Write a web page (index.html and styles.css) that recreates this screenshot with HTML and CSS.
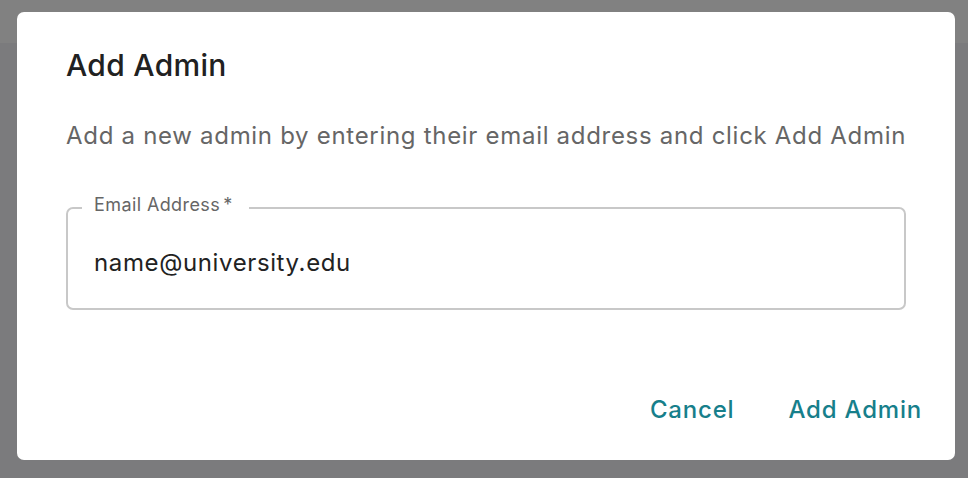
FILE: index.html
```html
<!DOCTYPE html>
<html lang="en">
<head>
<meta charset="utf-8">
<title>Add Admin</title>
<link rel="stylesheet" href="styles.css">
</head>
<body>
<div class="backdrop">
  <div class="dialog" role="dialog" aria-labelledby="dlg-title">
    <h2 class="dialog-title" id="dlg-title">Add Admin</h2>
    <p class="dialog-text">Add a new admin by entering their email address and click Add Admin</p>
    <fieldset class="field">
      <legend class="field-label">Email Address<span class="req">*</span></legend>
      <div class="field-value">name@university.edu</div>
    </fieldset>
    <div class="dialog-actions">
      <button class="btn">Cancel</button>
      <button class="btn">Add Admin</button>
    </div>
  </div>
</div>
</body>
</html>
```

FILE: styles.css
```css
html, body {
  margin: 0;
  padding: 0;
}
body {
  width: 968px;
  height: 478px;
  overflow: hidden;
  background: linear-gradient(to bottom, #818181 0, #818181 43px, #7b7b7d 43px, #7b7b7d 100%);
  font-family: "Inter", "Noto Sans", sans-serif;
}
.backdrop {
  padding: 12px 13px 18px 17px;
}
.dialog {
  box-sizing: border-box;
  width: 938px;
  height: 448px;
  background: #fff;
  border-radius: 7px;
  padding: 35px 49px 0 49px;
  display: flex;
  flex-direction: column;
}
.dialog-title {
  margin: 0;
  font-size: 30px;
  line-height: 36px;
  font-weight: 500;
  letter-spacing: 0.3px;
  color: #212121;
}
.dialog-text {
  margin: 38px 0 0 0;
  font-size: 24px;
  line-height: 30px;
  font-weight: 400;
  letter-spacing: 0.7px;
  color: #666666;
  white-space: nowrap;
}
.field {
  margin: 43px 0 0 0;
  padding: 0 0 30px 14px;
  border: 2px solid #c8c8c8;
  border-radius: 7px;
  min-width: 0;
}
.field-label {
  padding: 0 16px 6px 12px;
  font-size: 18px;
  line-height: 22px;
  letter-spacing: 0.4px;
  color: #666666;
}
.req {
  margin-left: 3px;
}
.field-value {
  padding: 26px 0 0 12px;
  font-size: 24px;
  line-height: 30px;
  letter-spacing: 0.62px;
  color: #222222;
}
.dialog-actions {
  margin-top: auto;
  display: flex;
  justify-content: flex-end;
  gap: 30px;
  padding: 0 0 23px 0;
  margin-right: -28px;
}
.btn {
  font-family: "Inter", "Noto Sans", sans-serif;
  font-size: 24px;
  line-height: 36px;
  font-weight: 500;
  letter-spacing: 0.8px;
  color: #177f8b;
  background: transparent;
  border: 0;
  padding: 9px 12px;
  cursor: pointer;
}
```
